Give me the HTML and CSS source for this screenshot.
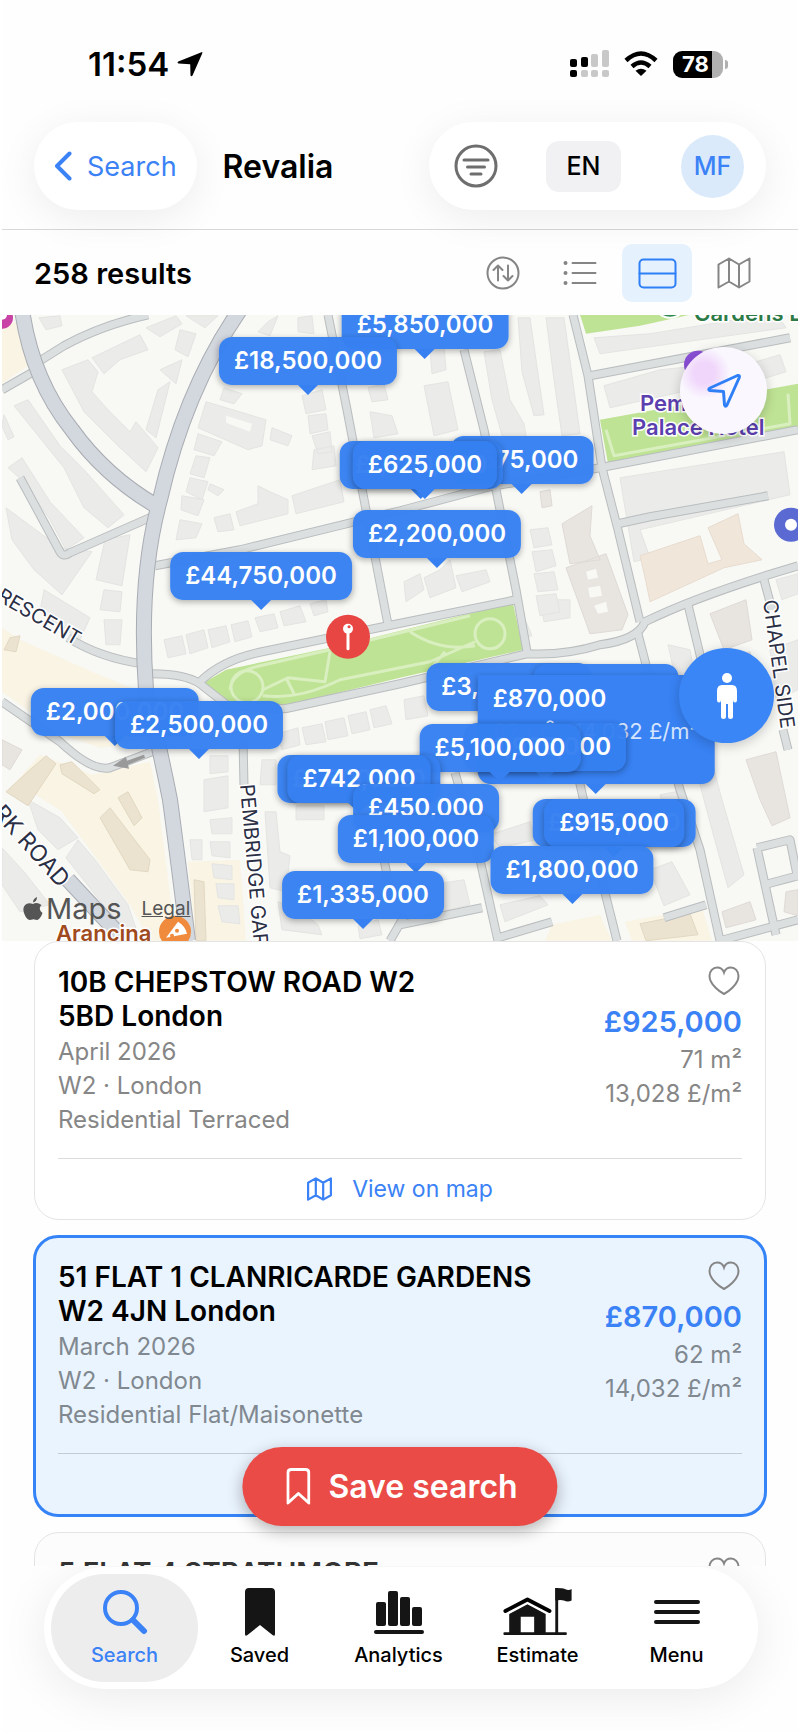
FILE: index.html
```html
<!DOCTYPE html>
<html lang="en">
<head>
  <meta charset="UTF-8" />
  <meta name="viewport" content="width=device-width, initial-scale=1.0"/>
  <title>Revalia</title>
  <link rel="stylesheet" href="styles.css">
</head>
<body>
  <!-- shared icons -->
  <svg class="sprite" aria-hidden="true">
    <symbol id="i-map" viewBox="0 0 34 32">
      <path d="M1.5 7.5 L12 1.5 L22 7.5 L32.5 1.5 V24.500 L22 30.500 L12 24.500 L1.500 30.500 Z M12 1.500 V24.500 M22 7.500 V30.500" />
    </symbol>
    <symbol id="i-heart" viewBox="0 0 32 30">
      <path d="M16 28 C13 26.500 1.500 19 1.500 10 C1.500 5 5 1.500 9 1.500 C12.500 1.500 15 3.500 16 6.500 C17 3.500 19.500 1.500 23 1.500 C27 1.500 30.500 5 30.500 10 C30.500 19 19 26.500 16 28 Z" />
    </symbol>
  </svg>

  <div class="screen">
    <div class="status-bar">
      <div class="clock">
        <span>11:54</span>
        <svg width="26" height="26" viewBox="0 0 26 26"><path d="M24.500 1.200 Q25.800 0.800 25.300 2.200 L15.500 24.500 Q14.500 26 13.500 24.500 L13.200 13.300 L1.500 12.500 Q-0.300 11.600 1.300 10.600 Z" /></svg>
      </div>
      <div class="phone-state">
        <svg width="39" height="28" viewBox="0 0 39 28">
          <g fill="#000"><rect x="0" y="9" width="7" height="8" rx="2"/><rect x="11" y="7" width="7" height="10" rx="2"/><rect x="0" y="20" width="7" height="7" rx="2"/></g>
          <g fill="#c8c8c8"><rect x="21" y="4" width="7" height="13" rx="2"/><rect x="32" y="0" width="7" height="17" rx="2"/><rect x="11" y="20" width="7" height="7" rx="2"/><rect x="21" y="20" width="7" height="7" rx="2"/><rect x="32" y="20" width="7" height="7" rx="2"/></g>
        </svg>
        <svg width="34" height="26" viewBox="0 0 34 26" fill="none" stroke="#000" stroke-width="4.500">
          <path d="M2 9.500 Q17 -4.500 32 9.500" /><path d="M8 15.500 Q17 7.500 26 15.500" />
          <path d="M17 25 L11.500 19.800 Q17 15.500 22.500 19.800 Z" fill="#000" stroke="none" />
        </svg>
        <div class="battery"><span>78</span></div>
      </div>
    </div>

    <header class="header">
      <button class="capsule back">
        <svg width="18" height="30" viewBox="0 0 18 30"><path d="M15.500 2.500 L3 15 L15.500 27.500" /></svg>
        Search
      </button>
      <h1>Revalia</h1>
      <div class="capsule actions">
        <button class="filter" aria-label="Filters">
          <svg width="44" height="44" viewBox="0 0 44 44"><circle cx="22" cy="22" r="20" /><path d="M10 16 H34 M13.500 23 H30.500 M17 30 H27" /></svg>
        </button>
        <button class="lang">EN</button>
        <button class="avatar">MF</button>
      </div>
    </header>

    <div class="toolbar">
      <h2>258 results</h2>
      <div class="views">
        <button aria-label="Sort"><svg width="34" height="34" viewBox="0 0 34 34"><circle cx="17" cy="17" r="15.500" /><path d="M12 24.500 V9.500 M7.500 14 L12 9.500 L16.500 14 M22 9.500 V24.500 M17.500 20 L22 24.500 L26.500 20" /></svg></button>
        <button aria-label="List"><svg width="34" height="26" viewBox="0 0 34 26"><path d="M9.500 3 H32.500 M9.500 13 H32.500 M9.500 23 H32.500" /><path class="dots" d="M2.500 3 h0 M2.500 13 h0 M2.500 23 h0" /></svg></button>
        <button class="on" aria-label="Split"><svg width="39" height="31" viewBox="0 0 39 31"><rect x="1.500" y="1.500" width="36" height="28" rx="4" /><path d="M1.500 15.500 H37.500" /></svg></button>
        <button aria-label="Map"><svg width="34" height="32"><use href="#i-map" /></svg></button>
      </div>
    </div>

    <div class="map" id="map">
      <svg class="tiles" viewBox="2 315 796 626" preserveAspectRatio="xMidYMid slice">
        <rect x="0" y="310" width="810" height="640" fill="#f8f8f5" />

        <!-- shopping blocks -->
        <g fill="#f9f4e4">
          <path d="M2 325 L17 322 L28 366 L2 384 Z" />
          <path d="M2 628 L20 640 L92 672 L136 690 L138 745 L100 748 L62 735 L2 692 Z" />
          <path d="M40 755 L92 775 L150 762 L158 800 L176 941 L150 941 L130 905 L90 850 L62 812 L16 782 Z" />
          <path d="M188 862 L240 860 L246 941 L196 941 Z" />
          <path d="M552 925 L600 915 L612 941 L545 941 Z M625 922 L702 908 L712 941 L632 941 Z" />
        </g>

        <!-- buildings -->
        <g fill="#ebebea" stroke="#e4e4e2" stroke-width="1">
          <path d="M39 318 L60 316 L62 326 L46 330 Z M146 328 L176 316 L182 324 L160 337 Z M186 316 L218 316 L205 328 Z" />
          <path d="M92 358 L140 335 L148 350 L120 360 L104 374 Z M62 370 L88 360 L98 372 L92 392 L108 410 L130 432 L136 422 L158 448 L146 472 L118 446 L84 412 Z" />
          <path d="M180 330 L196 334 L188 357 L175 350 Z M160 370 L182 360 L176 384 Z M170 382 L156 438 L146 430 L158 390 Z" />
          <path d="M14 406 L28 400 L60 446 L84 470 L124 515 L108 528 L84 508 L64 468 Z" />
          <path d="M4 415 L14 437 L8 440 L2 426 Z M8 468 L22 458 L50 502 L84 538 L66 550 L50 520 L24 482 Z M6 508 L60 548 L92 552 L62 595 L34 570 L12 540 Z" />
          <path d="M44 590 L90 618 L80 640 L40 612 Z M105 540 L130 535 L122 586 L96 580 Z M104 590 L122 592 L120 612 L100 610 Z M104 620 L122 620 L120 645 L106 645 Z" />
          <path d="M224 388 L242 394 L234 404 L220 400 Z M206 402 L266 420 L262 446 L248 450 L198 428 Z M272 428 L292 436 L288 446 L270 440 Z M198 434 L222 442 L214 456 L194 450 Z" />
          <path d="M196 456 L210 458 L204 478 L190 474 Z M190 478 L208 482 L202 500 L186 492 Z M182 496 L204 500 L198 516 L181 510 Z M210 484 L224 490 L218 496 L208 490 Z M180 520 L202 524 L196 538 L176 540 Z" />
          <path d="M214 518 L230 514 L234 530 L218 532 Z M236 512 L258 504 L258 486 L270 492 L288 500 L288 514 L240 526 Z M292 496 L340 480 L344 502 L296 514 Z" />
          <path d="M302 396 L322 390 L326 410 L306 414 Z M308 416 L326 414 L328 430 L310 434 Z M312 436 L330 432 L332 452 L318 454 Z M314 450 L334 446 L336 466 L312 470 Z" />
          <path d="M268 322 L278 316 L270 336 L258 332 Z M298 318 L312 316 L314 334 L298 332 Z M368 388 L384 384 L388 400 L372 402 Z M370 412 L392 416 L398 434 L374 438 Z" />
          <path d="M424 386 L448 382 L458 430 L434 436 Z M430 350 L444 346 L446 370 L432 374 Z M484 352 L500 350 L510 400 L524 424 L530 460 L510 464 L492 400 Z" />
          <path d="M518 318 L530 318 L536 360 L544 415 L534 416 L522 372 Z M546 318 L564 318 L580 434 L562 436 L554 380 Z" />
          <path d="M594 338 L650 334 L760 316 L782 322 L786 328 L600 354 Z M604 386 L660 370 L700 366 L700 388 L610 408 Z M756 362 L780 355 L786 372 L760 380 Z" />
          <path d="M620 478 L784 452 L790 495 L640 530 L650 558 L634 562 Z" />
          <path d="M404 582 L420 574 L424 590 L406 602 Z M424 578 L440 570 L450 560 L456 588 L430 598 Z M456 576 L486 570 L490 582 L462 592 Z" />
          <path d="M164 640 L182 636 L186 654 L168 658 Z M186 635 L204 630 L208 648 L190 654 Z M208 630 L226 626 L230 642 L212 648 Z M231 625 L248 621 L252 637 L235 642 Z M255 618 L274 614 L278 628 L260 632 Z M280 612 L300 606 L306 622 L284 626 Z M310 604 L326 600 L328 612 L314 616 Z" />
          <path d="M302 728 L322 724 L326 742 L306 745 Z M325 722 L344 718 L348 736 L328 740 Z M348 716 L366 712 L370 730 L352 734 Z M370 710 L386 706 L392 724 L374 728 Z M278 734 L298 728 L300 745 L282 750 Z" />
          <path d="M262 760 L276 760 L276 785 L260 785 Z M210 756 L228 756 L228 772 L210 774 Z M204 780 L228 776 L228 808 L204 812 Z M210 820 L232 818 L232 834 L212 834 Z M210 842 L230 842 L230 858 L212 856 Z M190 840 L202 840 L202 860 L192 860 Z M212 864 L232 866 L232 880 L214 878 Z M216 884 L234 884 L234 900 L218 898 Z M218 906 L238 906 L240 924 L222 922 Z" />
          <path d="M265 812 L276 812 L280 852 L290 856 L286 892 L270 888 Z M296 806 L324 806 L324 820 L296 820 Z M278 902 L300 910 L318 925 L322 935 L282 930 Z M358 926 L378 920 L382 935 L360 939 Z" />
          <path d="M28 800 L60 818 L78 838 L58 850 L38 830 Z M78 840 L95 860 L128 905 L138 935 L115 920 L66 858 Z M2 848 L24 872 L50 905 L20 912 L2 885 Z" />
          <path d="M432 626 L456 622 L462 636 L440 642 Z M470 600 L500 600 L500 618 L474 622 Z" transform="translate(70 0)" />
          <path d="M404 700 L424 696 L428 716 L406 720 Z M490 835 L530 822 L536 840 L500 848 Z M432 885 L464 880 L470 905 L440 912 Z M500 905 L540 896 L548 905 L505 922 Z" />
          <path d="M530 530 L548 528 L552 545 L534 548 Z M532 552 L552 550 L556 566 L536 572 Z M534 574 L554 572 L558 590 L538 592 Z M536 596 L556 594 L560 612 L540 616 Z" />
          <path d="M668 645 L690 650 L706 740 L722 800 L744 875 L728 888 L712 830 L696 770 Z M650 870 L672 862 L690 895 L664 906 Z M660 795 L676 792 L684 820 L668 824 Z M770 650 L798 640 L798 690 L776 700 Z M776 580 L798 574 L798 594 L782 600 Z" />
        </g>
        <g fill="#e8e4e0" stroke="#dfdad6" stroke-width="1">
          <path d="M562 524 L592 506 L590 536 L600 560 L570 564 Z M566 568 L606 554 L628 615 L622 630 L590 634 Z" />
          <path d="M710 614 L746 600 L752 640 L724 650 Z M720 660 L750 652 L760 690 L736 700 Z M746 760 L776 752 L790 818 L772 826 L760 800 Z M722 912 L750 902 L756 920 L726 928 Z M786 892 L798 890 L798 916 L784 912 Z" />
          <path d="M540 492 L550 490 L552 506 L542 508 Z M2 740 L22 750 L10 770 L2 765 Z" />
        </g>
        <g fill="#f1e6da" stroke="#e8dccf" stroke-width="1">
          <path d="M640 556 L700 536 L708 564 L722 560 L708 528 L738 514 L744 544 L762 560 L724 568 L650 602 L646 582 Z" />
        </g>
        <g fill="#ebe2cf" stroke="#e2d8c2" stroke-width="1">
          <path d="M30 770 L46 756 L56 764 L28 806 L6 792 Z M60 765 L72 762 L100 790 L94 794 L62 774 Z M100 818 L110 808 L150 860 L148 872 L130 870 Z M118 798 L128 792 L142 818 L134 826 Z" />
          <path d="M194 880 L204 882 L206 941 L196 941 Z M640 924 L690 914 L698 935 L646 941 Z M10 638 L20 636 L16 652 L4 650 Z" />
        </g>
        <g fill="#f8f8f5"><path d="M226 416 L252 424 L250 432 L226 423 Z M586 572 L596 569 L598 578 L588 580 Z M588 588 L600 586 L602 596 L590 598 Z M594 606 L606 602 L608 612 L598 614 Z" /></g>

        <!-- gardens -->
        <g fill="#bfe394">
          <path d="M580 315 L690 315 L640 326 L586 334 Z" />
          <path d="M600 420 L798 384 L798 430 L608 464 Z" />
          <path d="M202 684 L226 670 L340 646 L513 603 L523 650 L400 678 L285 706 L225 703 Z" />
        </g>
        <g class="paths">
          <path d="M606 430 L614 456 L790 424 L788 394" />
          <circle cx="247" cy="687" r="16" /><circle cx="490" cy="634" r="15" />
          <path d="M230 690 Q232 672 260 666 L330 650 L470 616 M263 690 L288 678 L325 682 L330 652 M286 678 L295 696 M263 696 Q300 700 340 680 L430 662 L475 642 M410 632 Q440 652 475 646 M445 652 L430 670" />
        </g>

        <!-- streets, outline first then fill -->
        <g class="street edge">
          <path id="s1" d="M40 361 L64 346 Q100 326 148 315 M2 390 L37 370" />
          <path id="s2" d="M20 478 L60 552 Q63 558 70 553 L152 517" />
          <path id="s3" d="M155 566 L240 550 L400 511 L490 487 L600 468 L798 430 M590 376 L790 338" />
          <path id="s4" d="M328 315 L347 410 L366 510 L388 625 M464 350 L484 430 L500 510 L516 590 L527 652" />
          <path id="s5" d="M573 315 L588 376 L602 468 L618 530 L640 622" />
          <path id="s6" d="M152 674 Q185 674 200 684 L228 706 L285 709 L400 684 L527 654 Q565 656 600 645 Q638 640 645 622 Q700 595 798 566" />
          <path id="s7" d="M200 682 Q222 660 262 652 L388 626 L516 600" />
          <path id="s8" d="M68 638 Q100 658 142 664 M2 702 L60 742 Q92 772 110 768 L152 752 M243 740 L244 786" />
          <path id="s9" d="M638 634 L655 700 L680 790 L700 850 L720 941 M688 605 L706 680 M764 580 L772 610 M783 730 L788 750 M579 780 L600 873 L617 941 M455 773 L480 860 L498 941" />
          <path id="s10" d="M400 925 L482 908 M498 938 L552 922 M664 918 L706 905 M757 848 L790 840 L798 880 M757 848 L776 935 M768 884 L798 876 M720 941 L798 920 M618 524 L650 517 L768 496 M384 860 L390 890 M390 941 L405 915" />
        </g>
        <g class="street">
          <use href="#s1" /><use href="#s2" /><use href="#s3" /><use href="#s4" /><use href="#s5" />
          <use href="#s6" /><use href="#s7" /><use href="#s8" /><use href="#s9" /><use href="#s10" />
        </g>
        <g class="avenue edge">
          <path id="a1" d="M22 310 Q32 380 72 430 Q105 476 156 506" />
          <path id="a2" d="M240 310 Q185 390 160 500 Q138 580 146 690 Q160 750 170 800 Q178 860 188 941" />
          <path id="a3" d="M68 880 L125 941" />
        </g>
        <g class="avenue"><use href="#a1" /><use href="#a2" /><use href="#a3" /></g>
        <path d="M113 766 L126 757 L127 761 L144 755 L145 758 L128 765 L129 769 Z" fill="#9a9a9a" />

        <g class="street-name">
          <text transform="translate(-4 600) rotate(30)">RESCENT</text>
          <text transform="translate(-8 814) rotate(48)" class="big">RK ROAD</text>
          <text transform="translate(240 785) rotate(85)">PEMBRIDGE GARDENS</text>
          <text transform="translate(763 601) rotate(82)">CHAPEL SIDE</text>
        </g>

        <!-- places -->
        <circle cx="670" cy="302" r="16" fill="#2f8a4e" stroke="#fff" stroke-width="2" />
        <text x="694" y="321" class="place park">Gardens L</text>
        <circle cx="698" cy="365" r="14" fill="#8a4fd6" />
        <text x="640" y="411" class="place hotel">Pembridge</text>
        <text x="632" y="435" class="place hotel">Palace Hotel</text>
        <circle cx="791" cy="525" r="17" fill="#5a6ad2" /><circle cx="791" cy="525" r="6" fill="#fff" />
        <circle cx="2" cy="318" r="11" fill="#c843a5" /><circle cx="2" cy="315" r="5" fill="#fff" />
        <text x="56" y="941" class="place food">Arancina</text>
        <circle cx="175" cy="932" r="16" fill="#f08a3c" />
        <path d="M166 938 L178 922 Q185 926 187 934 Z" fill="#fff" /><circle cx="177" cy="931" r="2" fill="#f08a3c" /><circle cx="172" cy="936" r="2" fill="#f08a3c" />
        <circle cx="348" cy="637" r="22" fill="#e84643" />
        <path d="M348 633 V649" stroke="#fff" stroke-width="3" stroke-linecap="round" /><circle cx="348" cy="629" r="5" fill="#fff" /><circle cx="349" cy="627" r="1.500" fill="#e84643" />
      </svg>

      <div class="attribution">
        <svg width="20" height="24" viewBox="0 0 20 24"><path d="M14 0 Q14 4.500 10 5.500 Q10 1.500 14 0 Z M10 7 Q14 4.800 18.500 8 Q14.500 12 19.500 16 Q17.500 21.500 14.500 23 Q12.500 23 10.500 22.200 Q8 23 6.500 23 Q3 22 1 16 Q-1 9.500 3.500 7 Q6 5.500 10 7 Z" /></svg>
        <span>Maps</span>
        <a href="#">Legal</a>
      </div>

      <button class="fab locate" aria-label="My location">
        <svg width="36" height="36" viewBox="0 0 36 36"><path d="M31.500 2.500 Q34 2 33.300 4.500 L21 32 Q19.500 34.500 18.500 32 L17.500 18.500 L4 17.500 Q1.500 16.500 4 15 Z" /></svg>
      </button>
      <button class="fab street-view" aria-label="Street view">
        <svg width="22" height="46" viewBox="0 0 22 46"><circle cx="11" cy="5" r="5" /><path d="M6 12 H16 Q21 12 21 18 V27 Q21 29.500 19 29.500 Q17 29.500 17 27 V44 Q17 46 14.500 46 Q12 46 12 44 V31 H10 V44 Q10 46 7.500 46 Q5 46 5 44 V27 Q5 29.500 3 29.500 Q1 29.500 1 27 V18 Q1 12 6 12 Z" /></svg>
      </button>
    </div>

    <div class="results">
      <div class="list">
        <article class="card">
          <div class="card-main">
            <div>
              <h3>10B CHEPSTOW ROAD W2<br>5BD London</h3>
              <p>April 2026</p>
              <p>W2 · London</p>
              <p>Residential Terraced</p>
            </div>
            <div class="figures">
              <button class="heart" aria-label="Save"><svg width="32" height="30"><use href="#i-heart" /></svg></button>
              <strong>£925,000</strong>
              <p>71 m²</p>
              <p>13,028 £/m²</p>
            </div>
          </div>
          <button class="view-on-map"><svg width="25" height="24"><use href="#i-map" /></svg>View on map</button>
        </article>

        <article class="card selected">
          <div class="card-main">
            <div>
              <h3>51 FLAT 1 CLANRICARDE GARDENS<br>W2 4JN London</h3>
              <p>March 2026</p>
              <p>W2 · London</p>
              <p>Residential Flat/Maisonette</p>
            </div>
            <div class="figures">
              <button class="heart" aria-label="Save"><svg width="32" height="30"><use href="#i-heart" /></svg></button>
              <strong>£870,000</strong>
              <p>62 m²</p>
              <p>14,032 £/m²</p>
            </div>
          </div>
          <div class="view-on-map"></div>
        </article>

        <article class="card faded">
          <div class="card-main">
            <h3>5 FLAT 4 STRATHMORE</h3>
            <div class="figures">
              <button class="heart" aria-label="Save"><svg width="32" height="30"><use href="#i-heart" /></svg></button>
            </div>
          </div>
        </article>
      </div>

      <button class="save-search">
        <svg width="24" height="37" viewBox="0 0 24 37"><path d="M1.500 35 V5 Q1.500 1.500 5 1.500 H19 Q22.500 1.500 22.500 5 V35 L12 25.500 Z" /></svg>
        Save search
      </button>
    </div>

    <nav class="tabs">
      <a href="#" class="active">
        <svg width="46" height="48" viewBox="0 0 46 48" fill="none" stroke="currentColor" stroke-linecap="round"><circle cx="19" cy="20" r="16" stroke-width="4" /><path d="M31 32 L42 43" stroke-width="6" /></svg>
        Search
      </a>
      <a href="#">
        <svg width="32" height="48" viewBox="0 0 32 48"><path d="M1 4 Q1 0 5 0 H27 Q31 0 31 4 V46 Q31 49 28.500 47 L16 37 L3.500 47 Q1 49 1 46 Z" /></svg>
        Saved
      </a>
      <a href="#">
        <svg width="50" height="48" viewBox="0 0 50 48"><rect x="2" y="14" width="10" height="24" rx="2" /><rect x="14" y="3" width="10" height="35" rx="2" /><rect x="26" y="9" width="10" height="29" rx="2" /><rect x="38" y="19" width="10" height="19" rx="2" /><rect x="0" y="42" width="50" height="4" rx="2" /></svg>
        Analytics
      </a>
      <a href="#">
        <svg width="72" height="50" viewBox="0 0 72 50">
          <path d="M6 48 V27 L25 17 L44 27 V48 H32 V30 H18 V48 Z" />
          <path d="M2 24 L25 12 L48 24" fill="none" stroke="#fff" stroke-width="8" />
          <path d="M2 24 L25 12 L48 24" fill="none" stroke="currentColor" stroke-width="4" stroke-linecap="round" stroke-linejoin="round" />
          <rect x="0" y="46" width="66" height="3" rx="1" /><rect x="54" y="0" width="3" height="48" />
          <path d="M54 0 Q62 0 64 1 Q68 3 71 1 V13 Q67 15 63 13 Q60 12 54 13 Z" />
        </svg>
        Estimate
      </a>
      <a href="#">
        <svg width="46" height="48" viewBox="0 0 46 48"><rect x="0" y="12" width="46" height="4" rx="2" /><rect x="0" y="22" width="46" height="4" rx="2" /><rect x="0" y="32" width="46" height="4" rx="2" /></svg>
        Menu
      </a>
    </nav>
  </div>

  <script>
    // tip of each pin on the map, later ones are drawn on top
    const PINS = [
      { x: 423, y: 44, price: '£5,850,000' },
      { x: 306, y: 80, price: '£18,500,000' },
      { x: 520, y: 179, price: '£575,000' },
      { x: 419, y: 184, price: '£1,250,000' },
      { x: 423, y: 184, price: '£625,000' },
      { x: 435, y: 253, price: '£2,200,000' },
      { x: 259, y: 295, price: '£44,750,000' },
      { x: 113, y: 431, price: '£2,000,000' },
      { x: 197, y: 444, price: '£2,500,000' },
      { x: 507, y: 406, price: '£3,750,000' },
      { x: 604, y: 407, price: '£820,000' },
      { x: 594, y: 479, price: '£870,000', detail: '62 m² · 14,032 £/m²' },
      { x: 543, y: 466, price: '£1,925,000' },
      { x: 498, y: 467, price: '£5,100,000' },
      { x: 357, y: 498, price: '£1,500,000' },
      { x: 357, y: 498, price: '£742,000' },
      { x: 424, y: 527, price: '£450,000' },
      { x: 414, y: 558, price: '£1,100,000' },
      { x: 361, y: 614, price: '£1,335,000' },
      { x: 612, y: 542, price: '£1,250,000' },
      { x: 612, y: 542, price: '£915,000' },
      { x: 570, y: 589, price: '£1,800,000' }
    ];

    const map = document.getElementById('map');

    PINS.forEach(pin => {
      const el = document.createElement('button');
      el.className = 'pin';
      el.style.left = `${pin.x}px`;
      el.style.top = `${pin.y}px`;
      el.textContent = pin.price;
      if (pin.detail) {
        const detail = document.createElement('span');
        detail.textContent = pin.detail;
        el.classList.add('open');
        el.appendChild(detail);
      }
      map.appendChild(el);
    });
  </script>
</body>
</html>
```
FILE: styles.css
```css
* {
  margin: 0;
  padding: 0;
  box-sizing: border-box;
}

body {
  height: 100vh;
  padding: 0 2px;
  background: #ffffff;
  font-family: Inter, "Liberation Sans", sans-serif;
  color: #000000;
}

button {
  border: none;
  background: none;
  font: inherit;
  color: inherit;
  cursor: pointer;
}

a {
  color: inherit;
  text-decoration: none;
}

svg {
  flex: none;
}

.sprite {
  position: absolute;
  width: 0;
  height: 0;
}

.screen {
  height: 100%;
  display: flex;
  flex-direction: column;
  background: #fefefe;
  overflow: hidden;
}

/* status bar */

.status-bar {
  height: 108px;
  padding: 20px 75px 0 86px;
  display: flex;
  align-items: center;
  justify-content: space-between;
}

.clock {
  display: flex;
  align-items: center;
  gap: 8px;
  font-size: 33px;
  font-weight: 600;
}

.phone-state {
  display: flex;
  align-items: center;
  gap: 15px;
}

.battery {
  position: relative;
  width: 50px;
  height: 27px;
  border-radius: 9px;
  background: linear-gradient(to right, #000 39px, #b0b0b0 39px);
  color: #ffffff;
  font-size: 22px;
  font-weight: 700;
  line-height: 27px;
  padding-left: 9px;
}

.battery::after {
  content: "";
  position: absolute;
  right: -5px;
  top: 9px;
  width: 3px;
  height: 9px;
  border-radius: 0 3px 3px 0;
  background: #b0b0b0;
}

/* header */

.header {
  display: flex;
  align-items: center;
  padding: 14px 32px 19px;
  border-bottom: 1px solid #d8d8d8;
}

.capsule {
  height: 88px;
  border-radius: 44px;
  background: #ffffff;
  box-shadow: 0 8px 40px rgba(0, 0, 0, 0.07);
  display: flex;
  align-items: center;
}

.back {
  gap: 15px;
  padding: 0 20px;
  color: #3b82f6;
  font-size: 27px;
}

.back svg {
  fill: none;
  stroke: #3b82f6;
  stroke-width: 4;
  stroke-linecap: round;
  stroke-linejoin: round;
}

.header h1 {
  margin-left: 26px;
  font-size: 32px;
  font-weight: 600;
}

.actions {
  margin-left: auto;
  padding: 0 22px 0 25px;
}

.filter svg {
  display: block;
  fill: none;
  stroke: #6e6e6e;
  stroke-width: 3;
  stroke-linecap: round;
}

.lang {
  width: 75px;
  height: 51px;
  margin: 0 60px 0 48px;
  border-radius: 13px;
  background: #f1f1f4;
  font-size: 25px;
  font-weight: 500;
}

.avatar {
  width: 63px;
  height: 63px;
  border-radius: 50%;
  background: #dbeafb;
  color: #3b82f6;
  font-size: 25px;
  font-weight: 500;
}

/* results toolbar */

.toolbar {
  display: flex;
  align-items: center;
  justify-content: space-between;
  padding: 14px 29px 13px 32px;
}

.toolbar h2 {
  font-size: 29px;
  font-weight: 600;
}

.views {
  display: flex;
  gap: 7px;
}

.views button {
  width: 70px;
  height: 58px;
  display: flex;
  align-items: center;
  justify-content: center;
  border-radius: 10px;
}

.views svg {
  fill: none;
  stroke: #858585;
  stroke-width: 2;
  stroke-linecap: round;
  stroke-linejoin: round;
}

.views .dots {
  stroke-width: 4;
}

.views .on {
  background: #e5f1fc;
}

.views .on svg {
  stroke: #2f80f7;
}

/* map */

.map {
  position: relative;
  flex: 1 1 0;
  min-height: 0;
  overflow: hidden;
}

.tiles {
  display: block;
  width: 100%;
  height: 100%;
}

.street,
.avenue,
.paths {
  fill: none;
  stroke-linejoin: round;
}

.street {
  stroke: #dcdfe0;
  stroke-width: 7;
}

.street.edge {
  stroke: #b9bdbe;
  stroke-width: 9;
}

.avenue {
  stroke: #d3d7de;
  stroke-width: 14;
}

.avenue.edge {
  stroke: #a9adb3;
  stroke-width: 16;
}

.paths {
  stroke: #d9efc0;
  stroke-width: 3;
}

.street-name text {
  font-size: 20px;
  fill: #2b2f45;
  stroke: #ffffff;
  stroke-width: 3;
  paint-order: stroke;
}

.street-name .big {
  font-size: 23px;
}

.place {
  font-size: 22px;
  font-weight: 600;
  stroke: #ffffff;
  stroke-width: 3;
  paint-order: stroke;
}

.park {
  fill: #2c7a45;
}

.hotel {
  fill: #5b3fae;
}

.food {
  fill: #a04a20;
}

.attribution {
  position: absolute;
  left: 21px;
  bottom: 12px;
  display: flex;
  align-items: center;
  gap: 3px;
  color: #555555;
  font-size: 29px;
  line-height: 40px;
}

.attribution svg {
  fill: #555555;
}

.attribution a {
  margin-left: 17px;
  font-size: 19px;
  text-decoration: underline;
}

.pin {
  position: absolute;
  transform: translate(-50%, -100%);
  height: 48px;
  margin-top: -10px;
  padding: 0 15px;
  border-radius: 13px;
  background: rgba(54, 128, 241, 0.97);
  box-shadow: 0 2px 6px rgba(0, 0, 0, 0.3);
  color: #ffffff;
  font-size: 24px;
  font-weight: 600;
  line-height: 48px;
  white-space: nowrap;
}

.pin::after {
  content: "";
  position: absolute;
  left: 50%;
  top: 100%;
  margin-left: -10px;
  border: 10px solid transparent;
  border-top-color: #3680f1;
  border-bottom: none;
}

.pin.open {
  height: 109px;
  border-top-left-radius: 0;
  text-align: left;
  display: flex;
  flex-direction: column;
  background: #3882f4;
}

.pin.open span {
  margin-top: -8px;
  font-size: 22px;
  line-height: 32px;
  font-weight: 400;
  color: #d5e5fd;
}

.fab {
  position: absolute;
  z-index: 1;
  border-radius: 50%;
  display: flex;
  align-items: center;
  justify-content: center;
  box-shadow: 0 3px 12px rgba(0, 0, 0, 0.2);
}

.locate {
  right: 31px;
  top: 32px;
  width: 87px;
  height: 87px;
  background: radial-gradient(circle at 28% 30%, #f0d6fb 12%, #faf8fe 30%);
}

.locate svg {
  fill: none;
  stroke: #2f80f7;
  stroke-width: 3;
  stroke-linejoin: round;
}

.street-view {
  right: 24px;
  top: 333px;
  width: 95px;
  height: 95px;
  background: #3a86f7;
}

.street-view svg {
  fill: #ffffff;
}

/* results */

.results {
  position: relative;
  flex: 1 1 0;
  min-height: 0;
}

.list {
  height: 100%;
  padding: 0 32px;
  display: flex;
  flex-direction: column;
  gap: 16px;
  overflow: hidden;
}

.card {
  flex: none;
  border: 1px solid #e4e4e4;
  border-radius: 25px;
  background: #ffffff;
  padding: 23px 23px 0;
}

.card-main {
  min-height: 194px;
  display: flex;
  justify-content: space-between;
  gap: 24px;
  border-bottom: 1px solid #dcdcdc;
}

.card h3 {
  margin-bottom: 2px;
  font-size: 28px;
  font-weight: 600;
  line-height: 34px;
  white-space: nowrap;
}

.card p {
  font-size: 24px;
  line-height: 34px;
  color: #868686;
  white-space: nowrap;
}

.figures {
  display: flex;
  flex-direction: column;
  align-items: flex-end;
}

.heart {
  height: 36px;
  margin-right: 2px;
}

.heart svg {
  fill: none;
  stroke: #868686;
  stroke-width: 2;
}

.figures strong {
  color: #3b82f6;
  font-size: 29px;
  font-weight: 600;
  line-height: 42px;
}

.view-on-map {
  width: 100%;
  height: 60px;
  display: flex;
  align-items: center;
  justify-content: center;
  gap: 20px;
  color: #3b82f6;
  font-size: 23px;
}

.view-on-map svg {
  fill: none;
  stroke: #3b82f6;
  stroke-width: 3;
  stroke-linejoin: round;
}

.card.selected {
  margin: -1px;
  border: 3px solid #3584f7;
  background: #eaf4fe;
  padding: 22px 22px 0;
}

.card.selected .card-main {
  border-color: #c0ccd6;
}

.card.selected p {
  color: #808890;
}

.card.faded {
  background: #fcfcfc;
}

.card.faded h3 {
  color: #333333;
}

.save-search {
  position: absolute;
  left: 50%;
  bottom: 40px;
  transform: translateX(-50%);
  height: 79px;
  padding: 0 40px 0 44px;
  display: flex;
  align-items: center;
  gap: 18px;
  border-radius: 40px;
  background: #ea4b46;
  box-shadow: 0 5px 16px rgba(0, 0, 0, 0.3);
  color: #ffffff;
  font-size: 32px;
  font-weight: 600;
  white-space: nowrap;
}

.save-search svg {
  fill: none;
  stroke: #ffffff;
  stroke-width: 3;
  stroke-linejoin: round;
}

/* tab bar */

.tabs {
  display: flex;
  height: 122px;
  margin: 1px 40px 42px 42px;
  padding: 7px 12px 7px 7px;
  border-radius: 61px;
  background: #ffffff;
  box-shadow: 0 8px 48px rgba(0, 0, 0, 0.08);
}

.tabs a {
  flex: 1 1 0;
  display: flex;
  flex-direction: column;
  align-items: center;
  justify-content: center;
  gap: 6px;
  border-radius: 54px;
  font-size: 20px;
  font-weight: 500;
  line-height: 26px;
}

.tabs svg {
  height: 48px;
  fill: #151515;
}

.tabs .active {
  flex: 0 0 147px;
  margin-right: -8px;
  background: #ededed;
  color: #3b82f6;
}

.tabs .active svg {
  fill: none;
}
```
